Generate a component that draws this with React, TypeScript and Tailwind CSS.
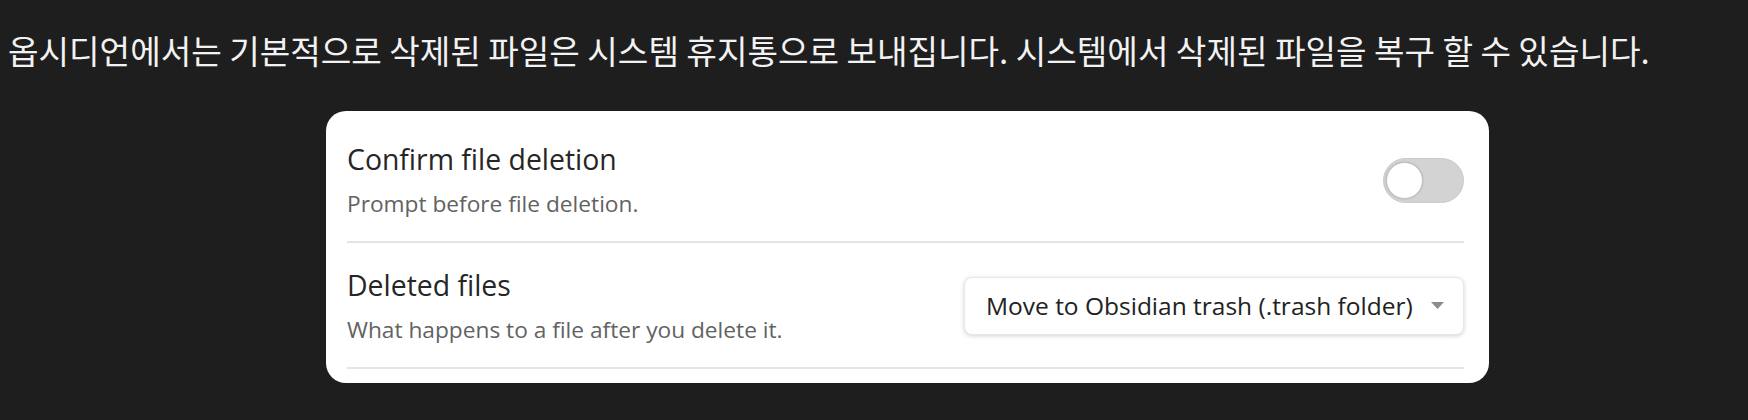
import React, { useState } from "react";

const Toggle = ({ on, onChange }: { on: boolean; onChange: () => void }) => (
  <button
    onClick={onChange}
    className={`relative h-[45px] w-[81px] shrink-0 rounded-full border border-[#cbcbcb] ${
      on ? "bg-[#7c5cd6]" : "bg-[#d3d3d3]"
    }`}
  >
    <span
      className={`absolute top-[3px] h-[37px] w-[37px] rounded-full border border-[#c0c0c0] bg-white shadow-[0_0_2px_rgba(0,0,0,0.2)] ${
        on ? "left-[39px]" : "left-[2px]"
      }`}
    />
  </button>
);

const Row = ({
  title,
  desc,
  children,
}: {
  title: string;
  desc: string;
  children: React.ReactNode;
}) => (
  <div className="flex items-center justify-between border-b-2 border-[#e4e4e4] pt-[26px] pb-[24px]">
    <div className="flex flex-col gap-[16px]">
      <div className="text-[28.4px] leading-[32px] text-[#262626]">{title}</div>
      <div className="text-[22.7px] leading-[26px] text-[#626262]">{desc}</div>
    </div>
    {children}
  </div>
);

export default function App() {
  const [confirm, setConfirm] = useState(false);

  return (
    <div className="min-h-screen bg-[#1e1e1f] pt-[28px] font-['Open_Sans',sans-serif]">
      <p className="pl-[8px] text-[33.2px] leading-[44px] text-[#f2f2f2] font-['Noto_Sans_CJK_KR','Open_Sans',sans-serif]">
        옵시디언에서는 기본적으로 삭제된 파일은 시스템 휴지통으로 보내집니다. 시스템에서 삭제된 파일을 복구 할 수 있습니다.
      </p>

      <div className="mt-[39px] ml-[326px] w-[1163px] rounded-[20px] bg-white pt-[6px] pb-[14px] pl-[21px] pr-[25px]">
        <Row title="Confirm file deletion" desc="Prompt before file deletion.">
          <Toggle on={confirm} onChange={() => setConfirm(!confirm)} />
        </Row>
        <Row title="Deleted files" desc="What happens to a file after you delete it.">
          <div className="flex h-[58px] w-[500px] items-center justify-between rounded-[8px] border border-[#e8e8e8] bg-white pl-[21px] pr-[19px] shadow-[0_1px_4px_rgba(0,0,0,0.18)]">
            <span className="text-[24.5px] text-[#222222]">
              Move to Obsidian trash (.trash folder)
            </span>
            <svg width="13" height="8" viewBox="0 0 13 8" className="shrink-0">
              <path d="M0 0 L13 0 L6.5 7 Z" fill="#8c8c8c" />
            </svg>
          </div>
        </Row>
      </div>
    </div>
  );
}
